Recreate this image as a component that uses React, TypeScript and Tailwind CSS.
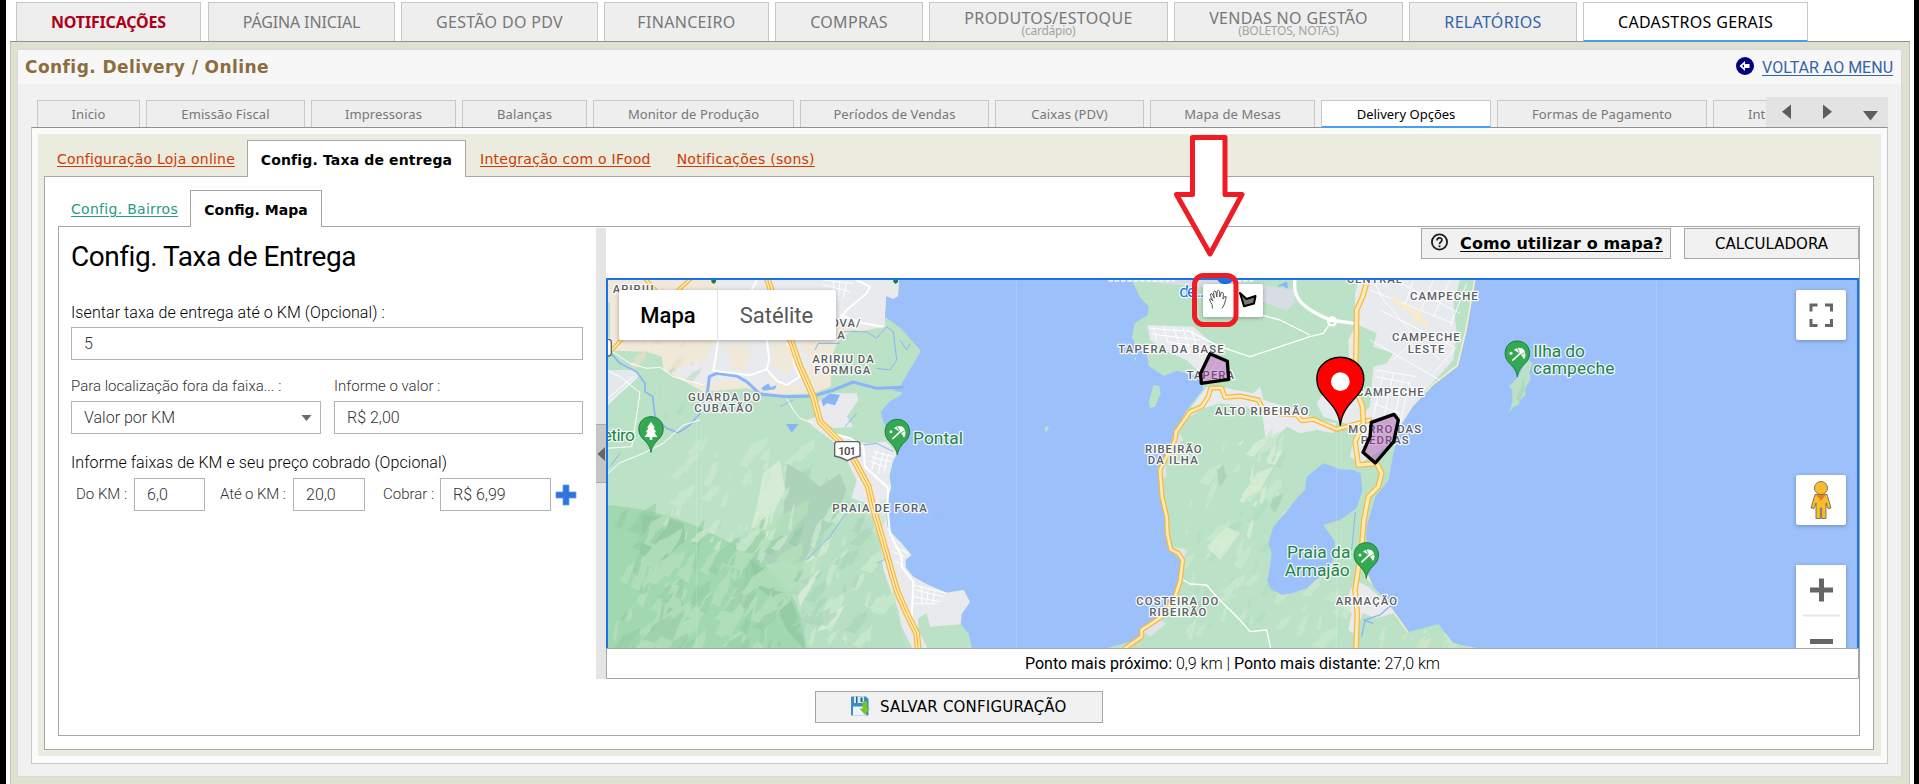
import React from "react";

/* ---------- map drawing helpers (tile units: 3 per screen pixel) ---------- */

function Pin({ x, y, kind }: { x: number; y: number; kind: "beach" | "park" }) {
  return (
    <g transform={`translate(${x} ${y})`}>
      <path d="M0 0C-3-22-16-32-27-44C-42-62-38-86-25-98C-11-110 11-110 25-98C38-86 42-62 27-44C16-32 3-22 0 0Z" fill="#34a853" stroke="#188038" strokeWidth="3" />
      {kind === "park" ? (
        <path d="M0-92L12-74H7L16-60H10L19-46H4V-38H-4V-46H-19L-10-60H-16L-7-74H-12Z" fill="#fff" />
      ) : (
        <g fill="none" stroke="#fff" strokeWidth="5">
          <circle cx="-19" cy="-70" r="4.500" fill="#fff" stroke="none" />
          <path d="M-15-48L10-71" />
          <path d="M-10-80C0-90 14-88 20-80C26-70 26-60 20-52L14-62L4-72Z" fill="#fff" stroke="none" />
          <path d="M-1-86L7-72M22-72L10-66" stroke="#34a853" strokeWidth="2.500" />
        </g>
      )}
    </g>
  );
}

function Area({ x, y, w, children }: { x: number; y: number; w: number; children: string }) {
  return (
    <text x={x} y={y} textLength={w} fontSize="34" fontWeight="500" fill="#5b6066" stroke="#fff" strokeOpacity="0.9" strokeWidth="8" strokeLinejoin="round" paintOrder="stroke" className="font-['Roboto',sans-serif]">
      {children}
    </text>
  );
}

function Place({ x, y, w, children, fill = "#1e8449" }: { x: number; y: number; w: number; children: string; fill?: string }) {
  return (
    <text x={x} y={y} textLength={w} fontSize="52" fontWeight="400" fill={fill} stroke="#fff" strokeOpacity="0.8" strokeWidth="8" strokeLinejoin="round" paintOrder="stroke" className="font-['Roboto',sans-serif]">
      {children}
    </text>
  );
}

function Highway({ d, w = 15 }: { d: string; w?: number }) {
  return (
    <g fill="none" strokeLinejoin="round" strokeLinecap="round">
      <path d={d} stroke="#f6b73c" strokeWidth={w} />
      <path d={d} stroke="#fde9b4" strokeWidth={w - 7} />
    </g>
  );
}

/* Relief shading: irregular slanted flecks scattered over hilly ground. */
function relief(seed: number, n: number, x: number, y: number, w: number, h: number, size: number) {
  let s = seed * 7919;
  const r = () => ((s = (s * 16807) % 2147483647) / 2147483647);
  const f = (v: number) => v.toFixed(0);
  let d = "";
  for (let i = 0; i < n; i++) {
    const px = x + r() * w, py = y + r() * h, l = size * (0.25 + r() * 0.9), a = 0.15 + r() * 0.6, t = size * (0.15 + r() * 0.35);
    d += `M${f(px)} ${f(py)}l${f(l * a * 0.5)} ${f(-l * 0.3)}l${f(l * a * 0.2)} ${f(-l * 0.25)}l${f(l * a)} ${f(-l * 0.35)}l${f(-t * 0.2)} ${f(l * 0.4)}l${f(-l * a * 0.6 + t * 0.3)} ${f(l * 0.3)}l${f(-l * a * 0.4)} ${f(l * 0.35)}z`;
  }
  return d;
}

const WEST_LAND =
  "M18 50L897 50L894 108L880 116L858 108L855 172L876 185L905 208L962 272L940 312L925 335L912 358L898 384L875 390L908 398L898 408L870 424L842 455L850 485L866 520L892 580L878 606L868 650L874 682L866 706L858 760L864 800L878 822L905 850L935 885L916 900L918 924L940 950L985 975L1040 998L1092 990L1110 1026L1085 1062L1082 1092L1106 1122L1117 1170L18 1170Z";
const EAST_LAND =
  "M270 50L300 112L327 140L322 166L284 190L276 232L290 262L320 280L326 318L372 348L412 332L440 340L480 352L490 388L440 450L402 520L380 600L356 640L362 720L380 790L384 856L412 890L432 920L424 960L402 1010L370 1072L320 1104L290 1140L180 1170L1340 1170L1240 1150L1196 1092L1106 1116L1052 1040L1000 980L978 930L980 800L1006 710L1046 660L1058 590L1080 500L1118 440L1180 375L1254 318L1280 210L1308 50Z";
const BR_101 =
  "M500 50L520 110L572 240L600 320L640 410L660 485L700 525L740 565L765 605L805 680L820 745L845 830L870 920L890 990L920 1060L950 1120L956 1180";

function MapCanvas() {
  return (
    <svg viewBox="608 280 1249 368" className="block h-[368px] w-[1249px] bg-[#9cc0fa]">
      <defs>
        <clipPath id="west"><path d={WEST_LAND} /></clipPath>
        <clipPath id="east"><path d={EAST_LAND} /></clipPath>
      </defs>

      {/* mainland */}
      <g transform="translate(600 260) scale(.33333)">
        <path d={WEST_LAND} fill="#bbe2c6" />
        <g clipPath="url(#west)">
          <path d="M18 50H897V115L855 150V200L780 215L715 240L695 290L692 380L640 400L520 405L440 385L310 395L190 330L186 290L140 275L40 272L18 260Z" fill="#f0e8d8" />
          <path d="M400 50H897V125L855 150V200L800 205L700 190L690 250L650 240L600 210L610 280L640 300L600 350L640 390L560 375L500 345L440 350L430 300L400 290L380 260L350 240V60Z" fill="#e8eaee" />
          <path d="M210 335L270 310L320 300L330 250L380 245L400 330L470 330L540 380L470 380L400 360L310 375Z" fill="#e8eaee" />
          <path d="M18 330L100 330L120 345L60 400L18 440Z" fill="#e4e8ed" />
          <path d="M18 120L30 130V230L18 240Z" fill="#bbe2c6" />
          <path d="M370 255L440 250L455 290L430 335L400 320ZM510 250L560 245L590 320L560 340L520 320Z" fill="#f0e8d8" />
          <path d="M715 240L760 210L850 235L858 172L905 208L962 272L898 384L820 380L760 360L695 380L692 300Z" fill="#bbe2c6" />
          <path d="M622 480L650 470L690 510L760 545L800 550L860 545L892 582L870 650L874 690L858 740L862 800L935 885L918 924L985 975L1092 990L1110 1026L1085 1092L1060 1100L1000 1105L980 1170H940L905 1100L895 1050L850 930L838 810L800 730L755 715L770 660L720 560L640 500Z" fill="#e8eaee" />
          <path d="M650 430L690 400L770 400L775 420L740 470L760 500L700 505L660 480Z" fill="#e8eaee" />
          <path d="M955 1075L980 1060L990 1100L1090 1092L1120 1170H985L955 1110Z" fill="#bbe2c6" />
          <path d="M560 610L610 640L660 680L720 640L740 690L700 790L640 850L600 930L560 900L480 920L520 830L550 760Z" fill="#add2ba" />
          <path d="M640 850L700 790L740 700L790 760L830 860L870 1000L920 1170H620L600 1000Z" fill="#b6dfc3" />
          <path d="M18 735C250 750 420 860 500 920C580 985 610 1060 620 1170H18Z" fill="#a2d8b0" />
          <path d="M130 765L190 770L250 790L260 840L210 880L180 930L120 880ZM180 1010L230 980L260 1060L210 1170H180ZM450 900C540 950 600 1030 615 1170L560 1110L520 1020L470 980Z" fill="#95cca6" />
          <path d="M490 640L540 600L555 690L520 760L500 850L440 860L470 740ZM690 1060L735 1035L700 1100L650 1115ZM600 930L650 870L690 850L650 950L600 1040L590 980Z" fill="#d5ebd3" />
          <path d={relief(91, 70, 18, 800, 560, 400, 95)} fill="#b3e0bb" opacity="0.8" />
          <path d={relief(37, 55, 18, 790, 590, 400, 80)} fill="#8fcba1" opacity="0.55" />
          <path d={relief(71, 50, 180, 570, 400, 300, 60)} fill="#c9e8cd" opacity="0.75" />
          <path d={relief(15, 36, 620, 760, 200, 400, 65)} fill="#c9e8cd" opacity="0.8" />
          <path d={relief(55, 30, 560, 640, 200, 500, 60)} fill="#a9d3b8" opacity="0.6" />
          <path d={relief(19, 14, 60, 190, 250, 140, 50)} fill="#ebe0c8" opacity="0.7" />
          <path d={relief(11, 9, 150, 340, 160, 140, 50)} fill="#acd9b9" opacity="0.5" />
        </g>
        {/* rivers and ponds */}
        <g fill="none" stroke="#8ab4f8" strokeLinejoin="round">
          <path d="M322 400L328 350L350 340L410 348L440 365L480 402L560 410L640 408L700 390L760 366L830 385L910 382" strokeWidth="9" />
          <path d="M18 262L60 310L110 335L135 370L135 395L158 410L165 470L200 505L235 518L270 495L300 460" strokeWidth="5" />
          <path d="M720 215L800 215L830 235L860 200L880 215L890 300L870 330L830 325M645 270L655 250L720 250M300 460L320 400M30 620L60 580M830 910L870 890M620 900L690 830L730 770L760 745M540 440L580 420M790 555L830 550L880 575M735 500L770 460M900 240L920 270L930 250" strokeWidth="3" />
        </g>
        <path d="M664 420L690 400L720 405L705 436L680 430L670 440ZM484 384L505 370L512 382L530 376L525 388L490 392ZM558 492L596 492L575 518Z" fill="#8ab4f8" />
        {/* streets */}
        <g fill="none" stroke="#fff" strokeLinejoin="round">
          <path d="M355 240L340 332L400 340L450 346L500 328L508 300L500 240M500 328L530 362L560 375L600 350L580 310L585 280L560 250M470 60L450 100M720 180L740 150L800 100L810 80L770 60M850 200L790 190L720 165M660 480L680 515L750 535L790 560L795 620L865 685L862 740L870 820L905 890L905 920L940 965L935 1080M490 1165" strokeWidth="6" />
          <path d="M18 330L60 350L120 398L105 500L95 560L18 565M30 270L90 310L140 325L180 322L220 350L310 375M18 645L60 608L130 580L190 550L250 495L300 480M560 415L580 450L600 475L640 490M670 60L760 70M670 75L750 95M675 90L720 120M700 60V105M720 62L716 110M740 65L730 115M670 130L690 150M820 575L880 590M815 590L870 605M810 605L862 622M832 570L815 630M850 575L835 640M866 580L850 640M940 975L1040 1000M945 990L1030 1010M940 1010L1020 1025M940 1030L1010 1032M965 980V1030M985 985L980 1030M1005 990L998 1030M880 860L925 880M878 875L915 890M885 905L910 915" strokeWidth="3" />
          <path d="M18 420L100 350M25 430L112 352" strokeWidth="3" />
        </g>
        <Highway d="M130 50L170 95M272 56L230 95L100 200L36 270" w={12} />
        <Highway d={BR_101} w={20} />
        <path d={BR_101} stroke="#f9ab1c" strokeWidth="3" fill="none" />
        <path d="M334 60H348V66L341 72L334 66ZM880 60H894V66L887 72L880 66Z" fill="#188038" />
        <path d="M1249 60V1165M290 240V1165" stroke="#fff" strokeWidth="2" opacity="0.25" />
        <path d="M1004 764L1014 768L1006 770Z" fill="#8fcba1" />

        <Area x={38} y={98} w={122}>ARIRIU</Area>
        <Area x={666} y={202} w={115}>NOVA/</Area>
        <Area x={712} y={236} w={22}>A</Area>
        <Area x={637} y={309} w={184}>ARIRIU DA</Area>
        <Area x={643} y={342} w={168}>FORMIGA</Area>
        <Area x={264} y={423} w={216}>GUARDA DO</Area>
        <Area x={283} y={456} w={175}>CUBATÃO</Area>
        <Area x={697} y={756} w={283}>PRAIA DE FORA</Area>
        <Place x={-22} y={544} w={127}>Retiro</Place>
        <Place x={939} y={551} w={150}>Pontal</Place>
        <Pin x={153} y={577} kind="park" />
        <Pin x={892} y={585} kind="beach" />
        <rect x="2" y="238" width="32" height="50" rx="9" fill="#fff" stroke="#666" strokeWidth="4" />
        <path d="M712 545H772Q780 545 780 554V588Q760 591 742 602Q724 591 704 588V554Q704 545 712 545Z" fill="#fff" stroke="#5f6368" strokeWidth="4" />
        <text x="715" y="585" fontSize="34" fontWeight="500" textLength="53" fill="#444" className="font-['Roboto',sans-serif]">101</text>
      </g>

      {/* island */}
      <g transform="translate(1040 260) scale(.33333)">
        <path d={EAST_LAND} fill="#bbe2c6" />
        <path d="M340 376L358 378L362 400L345 440L330 444L326 425L334 400ZM14 505L24 496L26 506L16 518ZM282 292L288 294L286 306Z" fill="#bbe2c6" />
        <g clipPath="url(#east)">
          <path d="M960 50H1308L1280 210L1254 318L1180 375L1118 440L1080 500L1040 560L960 610L930 590L950 500L850 470L830 430L850 400L930 390L925 240L945 200L945 100Z" fill="#e8eaee" />
          <path d="M322 195L460 200L505 240L510 280L560 300L560 360L490 370L470 330L440 300L390 280L330 240Z" fill="#e8eaee" />
          <path d="M500 380L560 385L640 400L660 380L670 420L770 450L830 480L890 490L880 520L830 510L780 520L740 500L720 520L700 535L676 530L668 470L620 440L540 430L490 445L450 470L455 440Z" fill="#e8eaee" />
          <path d="M330 56H560L640 72L765 90L762 130L740 152L680 130L640 110L560 90L330 66Z" fill="#d8dce4" />
          <path d="M1262 50L1308 50L1280 210L1254 318L1180 375L1130 420L1240 300L1250 220L1240 130ZM955 195L1010 220L1000 260L1060 280L1040 310L1000 320L990 440L960 470L950 300Z" fill="#bbe2c6" />
          <path d="M1308 50L1280 210L1254 318L1180 375L1160 396" stroke="#fdecc0" strokeWidth="9" fill="none" />
          <path d="M975 940L1052 1040L1106 1116" stroke="#fdecc0" strokeWidth="8" fill="none" />
          <path d="M945 960L985 980L1050 1040L1060 1060L1010 1075L970 1060L940 1120L925 1110L935 1060L910 1040Z" fill="#e8eaee" />
          <path d="M355 620L375 600L380 650L362 660ZM395 860L440 868L432 900L405 890ZM300 1110L360 1080L380 1090L330 1130ZM400 560L420 520L430 540Z" fill="#e0e4e8" />
          <path d={relief(23, 44, 400, 540, 330, 600, 62)} fill="#c9e8cd" opacity="0.8" />
          <path d={relief(29, 14, 580, 540, 200, 340, 55)} fill="#d9edd4" opacity="0.8" />
          <path d={relief(43, 26, 440, 560, 270, 560, 52)} fill="#acd9b9" opacity="0.5" />
          <path d={relief(47, 14, 760, 1000, 140, 160, 60)} fill="#c9e8cd" opacity="0.8" />
          <path d={relief(49, 20, 1000, 1110, 300, 80, 52)} fill="#cfe8c8" opacity="0.8" />
          <path d="M610 700L650 640L700 620L660 690L620 712ZM500 860L560 800L600 820L540 900Z" fill="#d9edd4" opacity="0.8" />
          <path d="M690 740L700 715L730 700L720 730L705 760ZM530 630L550 615L560 650L540 680ZM460 1040L480 1020L490 1045L470 1065Z" fill="#a9d1b6" opacity="0.8" />
          <path d="M850 610L880 620L900 628L940 630L962 640L967 690L950 745L900 780L850 795L885 845L880 900L850 940L800 985L755 1000L725 1004L690 985L682 960L690 920L695 880L685 850L700 800L735 760L770 715L795 690L800 650Z" fill="#9cc0fa" />
        </g>
        <g fill="none" stroke="#fff" strokeLinejoin="round">
          <path d="M765 60C755 120 800 150 870 180L945 190" strokeWidth="10" />
          <circle cx="876" cy="184" r="12" strokeWidth="7" />
          <path d="M870 190L850 220L810 230L630 290L540 260L440 210M665 165L720 180L810 225M430 960L450 972L500 975L530 1010L600 1080L630 1115L680 1110L692 1165" strokeWidth="4" />
          <path d="M990 90L1240 190M1000 60L1030 120L1100 200L1200 300M1060 60L1260 160M1020 150L1240 260M990 240L1200 360M1280 70L1230 200M1230 60L1180 170M1180 60L1140 160M1120 60L1090 150M1010 330L1130 350M1005 350L1110 370M1000 430L1080 460M1030 340L1000 470M1060 340L1030 480M1090 350L1060 490M1110 360L1080 490M1060 300L1130 230M1180 340L1250 260" strokeWidth="3" opacity="0.85" />
          <path d="M330 205L460 215M335 222L480 240M380 245L490 262M340 200L350 240M370 200L385 250M400 200L425 275M430 205L450 280M455 210L480 290M560 300L520 350M540 290L500 350" strokeWidth="3" />
        </g>
        <path d="M1060 114L1098 148M1096 136L1164 198M1125 190L1140 150" stroke="#fdecc0" strokeWidth="10" fill="none" />
        <path d="M714 78L740 66L742 84L728 76ZM935 870L946 756" stroke="#8ab4f8" strokeWidth="3" fill="#8ab4f8" />
        <path d="M970 1080L1000 1090M965 1130L975 1080L1020 1065L1060 1030L1070 1000" stroke="#8ab4f8" strokeWidth="4" fill="none" />
        <path d="M889 500V1165" stroke="#fff" strokeWidth="2" opacity="0.25" />

        <Highway d="M255 1165L305 1130V1110L365 1070L405 1010L420 965L428 900L415 880L392 868L382 820L380 770L366 710L360 630L375 600L405 540L408 515L450 455L485 440L505 410L512 384L545 384L555 412L600 408L655 420L670 450L720 462L770 465L785 482L820 478L890 508L970 485L990 480" />
        <Highway d="M985 50L968 110L950 150L948 280L945 380L968 440L970 490L945 545L955 615L1010 610L1025 640L1015 680L985 710L972 780L965 860L945 990L952 1060L948 1165" w={17} />

        <path d="M522 50H590L572 68L556 74L540 68Z" fill="#1a73e8" />
        <Place x={418} y={111} w={74} fill="#1a73e8">de...</Place>
        <path d="M205 62H405M590 62H640" stroke="#fff" strokeWidth="6" opacity="0.8" strokeDasharray="14 5" />

        <Area x={920} y={70} w={166}>CENTRAL</Area>
        <Area x={1110} y={121} w={203}>CAMPECHE</Area>
        <Area x={1056} y={244} w={203}>CAMPECHE</Area>
        <Area x={1103} y={278} w={110}>LESTE</Area>
        <Area x={948} y={408} w={203}>CAMPECHE</Area>
        <Area x={235} y={279} w={316}>TAPERA DA BASE</Area>
        <Area x={440} y={357} w={142}>TAPERA</Area>
        <Area x={525} y={465} w={280}>ALTO RIBEIRÃO</Area>
        <Area x={315} y={579} w={170}>RIBEIRÃO</Area>
        <Area x={323} y={612} w={150}>DA ILHA</Area>
        <Area x={925} y={519} w={218}>MORRO DAS</Area>
        <Area x={962} y={552} w={144}>PEDRAS</Area>
        <Area x={289} y={1034} w={246}>COSTEIRA DO</Area>
        <Area x={328} y={1068} w={171}>RIBEIRÃO</Area>
        <Area x={887} y={1034} w={184}>ARMAÇÃO</Area>
        <Place x={741} y={895} w={190}>Praia da</Place>
        <Place x={734} y={948} w={195}>Armajão</Place>
        <Pin x={979} y={955} kind="beach" />

        {/* delivery zones */}
        <g fill="#9b30a0" fillOpacity="0.38" stroke="#000" strokeWidth="10" strokeLinejoin="round">
          <path d="M510 281L562 304L566 358L484 370L482 340Z" />
          <path d="M994 487L1062 463L1075 480L1061 545L1006 609L969 577L990 530Z" />
        </g>
        <path d="M901 497C897 450 868 428 848 404C826 378 824 338 846 315C876 284 926 284 956 315C978 338 976 378 954 404C934 428 905 450 901 497Z" fill="#f00" stroke="#000" strokeWidth="4" />
        <circle cx="901" cy="365" r="28" fill="#fff" />
      </g>

      {/* Ilha do Campeche */}
      <g transform="translate(1440 260) scale(.33333)">
        <path d="M235 350L262 298L278 310L268 335L272 360L255 385L257 405L240 420L236 435L220 440L207 459L217 425V390L207 380L218 368Z" fill="#bbe2c6" />
        <path d="M250 350L256 385L238 425L228 420L240 390Z" fill="#acd9b9" />
        <path d="M649 60V1165" stroke="#fff" strokeWidth="2" opacity="0.25" />
        <Place x={280} y={290} w={155}>Ilha do</Place>
        <Place x={279} y={342} w={244}>campeche</Place>
        <Pin x={232} y={350} kind="beach" />
      </g>
    </svg>
  );
}

/* ------------------------------- map widgets ------------------------------ */

function MapControls() {
  return (
    <>
      <div className="absolute left-[11px] top-[10px] flex h-[50px] rounded-[2px] bg-white font-['Roboto',sans-serif] text-[22px] leading-[51px] shadow-[0_1px_4px_rgba(0,0,0,0.3)]">
        <div className="w-[98px] text-center font-medium text-black">Mapa</div>
        <div className="w-[119px] border-l border-[#e4e4e4] pr-px text-center text-[#565656]">Satélite</div>
      </div>

      <div className="absolute left-[595px] top-[4px] flex h-[33px] w-[60px] rounded-[2px] bg-white shadow-[0_1px_4px_rgba(0,0,0,0.3)]">
        <svg viewBox="0 0 60 33" className="h-[33px] w-[60px]">
          <path d="M9.500 24.500L9 20.500L6.500 16L7 14.700L8.800 15.600L10 17L7.300 11.200L8 9.600L9.400 10.300L11.300 14.200L10.500 8.200L11.500 6.800L13 8L13.800 13L14.300 7L15.600 6.300L16.700 7.600V13L18.300 8.500L19.500 8.200L20.400 9.600L20 15L22 12.200L23.300 12.800L22.600 15.500L21.500 20L19 24.500" fill="#fff" stroke="#555" strokeWidth="1" strokeLinejoin="round" />
          <path d="M37 9L43.500 15L52.500 12L51 19.500L41 22.300Z" fill="#777" stroke="#000" strokeWidth="2" strokeLinejoin="round" />
        </svg>
      </div>

      <div className="absolute right-[11px] top-[10px] flex size-[50px] items-center justify-center rounded-[2px] bg-white shadow-[0_1px_4px_rgba(0,0,0,0.3)]">
        <svg viewBox="0 0 24 24" className="size-6" fill="none" stroke="#666" strokeWidth="3">
          <path d="M2 8.500V2H8.500M16 2H22.500V8.500M22.500 16V22.500H16M8.500 22.500H2V16" />
        </svg>
      </div>

      <div className="absolute right-[11px] top-[195px] flex size-[50px] items-center justify-center rounded-[2px] bg-white shadow-[0_1px_4px_rgba(0,0,0,0.3)]">
        <svg viewBox="0 0 22 40" className="h-10 w-[22px]" stroke="#6f6a5c" strokeWidth="0.9">
          <path d="M5 14.500H17L21 28L18 28.500L16 23V38.500H11.600V28H10.400V38.500H6V23L4 28.500L1 28Z" fill="#fbbc2c" />
          <path d="M6 14.500H16L11 21Z" fill="#e37f2b" stroke="none" />
          <circle cx="11" cy="8" r="6.500" fill="#fbbc2c" />
        </svg>
      </div>

      <div className="absolute right-[11px] top-[285px] h-[83px] w-[50px] overflow-hidden bg-white shadow-[0_1px_4px_rgba(0,0,0,0.3)]">
        <svg viewBox="0 0 50 83" className="h-[83px] w-[50px]">
          <path d="M14 25H37M25.500 13.500V36.500M14 76.500H37" stroke="#666" strokeWidth="5" />
          <path d="M7 50.500H44" stroke="#e6e6e6" strokeWidth="2" />
        </svg>
      </div>
    </>
  );
}

/* --------------------------------- chrome --------------------------------- */

function MainTab({ className, sub, children }: { className: string; sub?: string; children: string }) {
  return (
    <div className={`flex shrink-0 flex-col items-center border border-b-0 border-[#c8c8c8] text-[16px] whitespace-nowrap ${sub ? "pt-[7px]" : "pt-[8px]"} ${className}`}>
      <span className={sub ? "leading-[17px]" : "leading-[22px]"}>{children}</span>
      {sub && <span className="-mt-[2px] text-[12px] leading-[12px] tracking-[-0.25px] text-[#a3a3a3]">{sub}</span>}
    </div>
  );
}

function SubTab({ className, children }: { className: string; children: string }) {
  return (
    <div className={`mb-px shrink-0 border border-b-0 border-[#c8c8c8] text-center text-[13px] leading-[27px] tracking-[0.1px] whitespace-nowrap ${className}`}>
      {children}
    </div>
  );
}

const IDLE = "bg-[#eeeeee] text-[#777777]";
const FIELD = "flex h-[33px] items-center border border-[#b3b3b3] px-3 text-[16px] text-[#333]";

export default function App() {
  return (
    <div className="relative h-[784px] w-[1919px] overflow-hidden border-r-[5px] border-l-[6px] border-black bg-white px-1 font-['Noto_Sans','Open_Sans',sans-serif]">
      {/* main tabs */}
      <div className="relative z-10 flex h-[41px] gap-[6px] pt-[2px] pl-[6px] tracking-[0.32px]">
        <MainTab className="w-[185px] bg-[#eeeeee] font-bold tracking-[-0.17px] text-[#ad0018]">NOTIFICAÇÕES</MainTab>
        <MainTab className={`ml-[1px] w-[187px] tracking-[-0.15px] ${IDLE}`}>PÁGINA INICIAL</MainTab>
        <MainTab className={`w-[197px] ${IDLE}`}>GESTÃO DO PDV</MainTab>
        <MainTab className={`w-[165px] ${IDLE}`}>FINANCEIRO</MainTab>
        <MainTab className={`w-[148px] ${IDLE}`}>COMPRAS</MainTab>
        <MainTab className={`w-[239px] ${IDLE}`} sub="(cardápio)">PRODUTOS/ESTOQUE</MainTab>
        <MainTab className={`w-[229px] ${IDLE}`} sub="(BOLETOS, NOTAS)">VENDAS NO GESTÃO</MainTab>
        <MainTab className="w-[168px] bg-[#eeeeee] text-[#3563a8]">RELATÓRIOS</MainTab>
        <div className="-mb-px flex w-[225px] items-center justify-center border border-b-2 border-[#c8c8c8] border-b-[#4d9bf5] bg-white text-[16px] whitespace-nowrap text-black">CADASTROS GERAIS</div>
      </div>

      {/* outer frame */}
      <div className="flex h-[743px] flex-col border-x border-t border-[#c0c0c0] border-t-[#909090] bg-[#dfe0cf] pt-[7px] pr-[7px] pb-[7px] pl-[6px]">
        <div className="flex min-h-0 flex-1 flex-col border border-[#d9d9d9] bg-[#f1f1f1] pr-[13px] pb-[12px] pl-[13px]">
          {/* heading */}
          <div className="-mx-[13px] flex h-[34px] shrink-0 items-center justify-between bg-[#f7f7f7] pr-[8px] pl-[7px]">
            <h1 className="pt-[2px] font-['DejaVu_Sans',sans-serif] text-[17px] font-bold tracking-[0.43px] text-[#8c6d3d]">Config. Delivery / Online</h1>
            <a className="mb-[2px] flex items-center gap-[8px] font-['Roboto',sans-serif] text-[16px] text-[#3563a8]">
              <svg viewBox="0 0 18 18" className="size-[18px]">
                <circle cx="9" cy="9" r="9" fill="#000080" />
                <path d="M3.500 9L9 4V7H13.500V11H9V14Z" fill="#fff" />
                <path d="M6 9L8 7.500V10.500Z" fill="#000080" />
              </svg>
              <span className="pt-[3px] underline underline-offset-2">VOLTAR AO MENU</span>
            </a>
          </div>

          {/* section tabs */}
          <div className="relative z-10 flex h-[44px] shrink-0 justify-between pt-[13px]">
            <div className="flex min-w-0 flex-1 gap-[6px] overflow-hidden pt-[3px] pl-[6px]">
              <SubTab className={`w-[103px] ${IDLE}`}>Inicio</SubTab>
              <SubTab className={`w-[159px] ${IDLE}`}>Emissão Fiscal</SubTab>
              <SubTab className={`w-[145px] ${IDLE}`}>Impressoras</SubTab>
              <SubTab className={`w-[125px] ${IDLE}`}>Balanças</SubTab>
              <SubTab className={`w-[201px] ${IDLE}`}>Monitor de Produção</SubTab>
              <SubTab className={`w-[189px] ${IDLE}`}>Períodos de Vendas</SubTab>
              <SubTab className={`w-[149px] ${IDLE}`}>Caixas (PDV)</SubTab>
              <SubTab className={`w-[165px] ${IDLE}`}>Mapa de Mesas</SubTab>
              <div className="w-[170px] shrink-0 border border-b-2 border-[#c8c8c8] border-b-[#4d9bf5] bg-white text-center text-[13px] leading-[27px] whitespace-nowrap text-black">Delivery Opções</div>
              <SubTab className={`w-[210px] ${IDLE}`}>Formas de Pagamento</SubTab>
              <div className="mb-px w-[160px] shrink-0 border border-b-0 border-[#c8c8c8] bg-[#eeeeee] pl-[34px] text-[13px] leading-[27px] text-[#777777]">Int</div>
            </div>
            <div className="mb-px h-[30px] w-[122px] bg-[#e3e3e3]">
              <svg viewBox="0 0 122 30" className="h-[30px] w-[122px]" fill="#5d5d5d">
                <path d="M25 7.500V22L16 14.700Z" />
                <path d="M57 7.500V22L66 14.700Z" />
                <path d="M97 14H112L104.500 23.500Z" />
              </svg>
            </div>
          </div>

          <div className="-mt-px flex min-h-0 flex-1 flex-col border border-[#c9c9c9] border-t-[#909090] bg-[#fbfbfb] px-[6px] pt-[6px] pb-[7px]">
            <div className="flex min-h-0 flex-1 flex-col bg-[#ebebdf] pt-[6px] pr-[7px] pb-[6px] pl-[6px] font-['DejaVu_Sans',sans-serif] text-[14px]">
              {/* delivery tabs */}
              <div className="flex h-[37px] shrink-0 items-stretch">
                <div className="w-[203px] border-b border-[#a6a6a6] pl-[13px] leading-[38px] tracking-[0.2px] whitespace-nowrap text-[#cf3a00]"><span className="underline underline-offset-2">Configuração Loja online</span></div>
                <div className="w-[219px] border border-b-0 border-[#a6a6a6] bg-white text-center leading-[38px] font-bold tracking-[0.15px] whitespace-nowrap text-black">Config. Taxa de entrega</div>
                <div className="flex flex-1 gap-[26px] border-b border-[#a6a6a6] pl-[14px] leading-[38px] tracking-[0.27px] whitespace-nowrap text-[#cf3a00]">
                  <span className="underline underline-offset-2">Integração com o IFood</span>
                  <span className="underline underline-offset-2">Notificações (sons)</span>
                </div>
              </div>

              <div className="flex min-h-0 flex-1 flex-col border border-t-0 border-[#a6a6a6] bg-white px-[13px] pt-[13px] pb-[13px]">
                {/* map tabs */}
                <div className="flex h-[37px] shrink-0 items-stretch">
                  <div className="w-[132px] border-b border-[#a6a6a6] pl-[13px] leading-[38px] tracking-[0.29px] whitespace-nowrap text-[#2b9a86]"><span className="underline underline-offset-2">Config. Bairros</span></div>
                  <div className="w-[132px] border border-b-0 border-[#a6a6a6] text-center leading-[38px] font-bold whitespace-nowrap text-black">Config. Mapa</div>
                  <div className="flex-1 border-b border-[#a6a6a6]" />
                </div>

                <div className="flex min-h-0 flex-1 flex-col border border-t-0 border-[#a6a6a6] pt-px">
                  <div className="flex h-[451px] shrink-0">
                    {/* form */}
                    <div className="w-[537px] shrink-0 pr-[13px] pl-3 font-['Roboto',sans-serif] font-light text-[#333]">
                      <h2 className="pt-[11px] text-[28px] leading-9 font-normal tracking-[-0.45px] text-black">Config. Taxa de Entrega</h2>
                      <div className="pt-[28px] text-[16px] leading-5 tracking-[0.08px] text-black">Isentar taxa de entrega até o KM (Opcional) :</div>
                      <div className={`mt-[4px] ${FIELD}`}>5</div>
                      <div className="mt-[14px] flex gap-[13px] text-[15px]">
                        <div className="w-[250px]">
                          <div className="h-[27px] leading-[24px]">Para localização fora da faixa... :</div>
                          <div className={`justify-between pr-2 ${FIELD}`}>
                            Valor por KM
                            <svg viewBox="0 0 10 6" className="h-[6px] w-[11px]"><path d="M0 0H10L5 6Z" fill="#6b6b6b" /></svg>
                          </div>
                        </div>
                        <div className="flex-1">
                          <div className="h-[27px] leading-[24px]">Informe o valor :</div>
                          <div className={FIELD}>R$ 2,00</div>
                        </div>
                      </div>
                      <div className="pt-[19px] text-[16px] leading-5 tracking-[0.08px] text-black">Informe faixas de KM e seu preço cobrado (Opcional)</div>
                      <div className="mt-[5px] flex items-center pl-[5px] text-[15px] whitespace-nowrap">
                        <div className="w-[58px]">Do KM :</div>
                        <div className={`w-[71px] ${FIELD}`}>6,0</div>
                        <div className="w-[88px] pl-[15px] tracking-[-0.1px]">Até o KM :</div>
                        <div className={`w-[72px] ${FIELD}`}>20,0</div>
                        <div className="w-[75px] pl-[18px]">Cobrar :</div>
                        <div className={`w-[111px] ${FIELD}`}>R$ 6,99</div>
                        <svg viewBox="0 0 22 22" className="ml-[4px] size-[22px]">
                          <path d="M8 1H14V8H21V14H14V21H8V14H1V8H8Z" fill="#2f74dc" stroke="#6a9de8" strokeWidth="0.8" />
                        </svg>
                      </div>
                    </div>

                    {/* splitter */}
                    <div className="flex w-[10px] shrink-0 items-center bg-[#e5e5e5]">
                      <div className="flex h-[59px] w-full items-center border-y border-[#aaa] bg-[#c6c6c6]">
                        <svg viewBox="0 0 10 16" className="h-4 w-[10px]"><path d="M9 1V15L1.500 8Z" fill="#666" /></svg>
                      </div>
                    </div>

                    {/* map column */}
                    <div className="flex w-[1253px] shrink-0 flex-col">
                      <div className="flex h-[50px] shrink-0 justify-end gap-[13px]">
                        <div className="flex h-[31px] w-[250px] items-center justify-between border border-[#a6a6a6] bg-[#f1f1f1] pr-[7px] pl-[9px] text-[16px] font-bold text-black">
                          <svg viewBox="0 0 18 18" className="mb-[3px] size-[18px]" fill="none" stroke="#1c1c1c">
                            <circle cx="8.500" cy="9" r="7.600" strokeWidth="1.800" />
                            <path d="M6 7.400C6 4 11 4 11 7C11 8.800 8.500 9 8.500 11.200" strokeWidth="1.700" />
                            <path d="M8.500 12.400V14.200" strokeWidth="1.800" />
                          </svg>
                          <span className="tracking-[0.11px] underline underline-offset-2">Como utilizar o mapa?</span>
                        </div>
                        <div className="flex h-[31px] w-[175px] items-center justify-center border border-[#a6a6a6] bg-[#f1f1f1] pt-px text-[15px] text-black">CALCULADORA</div>
                      </div>
                      <div className="relative h-[370px] shrink-0 overflow-hidden border-2 border-b-0 border-[#1a73e8]">
                        <MapCanvas />
                        <MapControls />
                      </div>
                      <div className="flex h-[31px] shrink-0 items-center justify-center border border-[#a6a6a6] font-['Roboto',sans-serif] text-[16px] whitespace-pre text-black">
                        <span>Ponto mais próximo:</span><span className="font-light"> 0,9 km | </span><span>Ponto mais distante:</span><span className="font-light"> 27,0 km</span>
                      </div>
                    </div>
                  </div>

                  {/* save */}
                  <div className="flex justify-center pt-[12px]">
                    <div className="flex h-[32px] w-[288px] items-center border border-[#a6a6a6] bg-[#f1f1f1] pl-[34px] text-[15px] tracking-[0.2px] whitespace-nowrap text-black">
                      <svg viewBox="0 0 20 20" className="mb-[2px] mr-[10px] size-[20px]">
                        <path d="M1 1.500Q1 .5 2 .5H16L18.500 3V18.500Q18.500 19.500 17.500 19.500H2Q1 19.500 1 18.500Z" fill="#3a8fc0" />
                        <path d="M4 .5H14V7H4Z" fill="#d5ebf7" />
                        <path d="M6 .5H7.500V7H6ZM10.500 1.500H12.500V6H10.500Z" fill="#24648f" />
                        <path d="M3 10.500H16V19.500H3Z" fill="#eef5fa" />
                        <path d="M12.500 5.500H17V12.500H19.800L14.800 18.800L9.500 12.500H12.500Z" fill="#7cc623" />
                      </svg>
                      SALVAR CONFIGURAÇÃO
                    </div>
                  </div>
                </div>
              </div>
            </div>
          </div>
        </div>
      </div>

      {/* callout marks */}
      <svg viewBox="0 0 90 200" className="pointer-events-none absolute top-[132px] left-[1160px] z-20 h-[200px] w-[90px]" fill="none" stroke="#ee1c25" strokeLinejoin="round">
        <path d="M26.500 5.500H59V62.500H76L44 122L10.500 62.500H26.500Z" fill="#fff" strokeWidth="5" />
        <rect x="28.500" y="143.500" width="41.500" height="49" rx="9" strokeWidth="5" />
      </svg>
    </div>
  );
}
